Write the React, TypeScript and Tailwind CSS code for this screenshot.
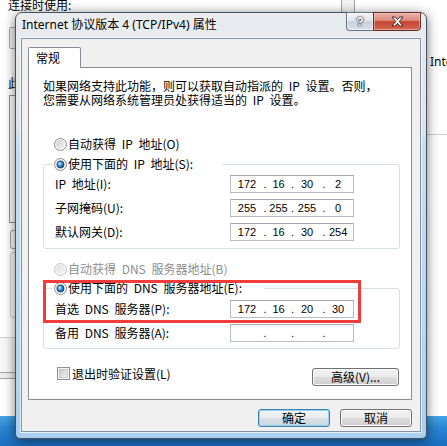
import React from 'react';

// slot widths of the four-field address control: field . field . field . field
const ipSlots = ['w-[32px]', 'w-[4px]', 'w-[23px]', 'w-[5px]', 'w-[24px]', 'w-[10px]', 'w-[18px]'];

const IpBox: React.FC<{ value?: string[] }> = ({ value }) => {
  const p = value ?? ['', '', '', ''];
  const segs = [p[0], '.', p[1], '.', p[2], '.', p[3]];
  return (
    <div className="flex h-[18px] w-[124px] items-center border border-[#b8bcc3] border-t-[#a4a7ae] bg-white font-['Liberation_Sans',sans-serif] text-[11px] leading-none text-black">
      {segs.map((s, i) => (
        <span key={i} className={`${ipSlots[i]} text-center`}>{s}</span>
      ))}
    </div>
  );
};

const Defs = () => (
  <svg width="0" height="0" className="absolute">
    <defs>
      <linearGradient id="rIn" x1="0" y1="0" x2="1" y2="1">
        <stop offset="0" stopColor="#c9cbce" />
        <stop offset="1" stopColor="#f7f7f7" />
      </linearGradient>
      <radialGradient id="rDot" cx="0.4" cy="0.4" r="0.65">
        <stop offset="0" stopColor="#9fe0ff" />
        <stop offset="0.55" stopColor="#2f86cf" />
        <stop offset="1" stopColor="#123d70" />
      </radialGradient>
      <linearGradient id="cbIn" x1="0" y1="0" x2="1" y2="1">
        <stop offset="0" stopColor="#c4c6c8" />
        <stop offset="1" stopColor="#f3f3f3" />
      </linearGradient>
    </defs>
  </svg>
);

const Radio: React.FC<{ checked?: boolean; disabled?: boolean }> = ({ checked, disabled }) => (
  <svg width="13" height="13" viewBox="0 0 13 13" className="shrink-0">
    <circle cx="6.5" cy="6.5" r="6" fill="#f4f4f4" stroke={disabled ? '#c6c6c6' : '#8e8f8f'} />
    <circle cx="6.5" cy="6.5" r="4.4" fill="url(#rIn)" opacity={disabled ? 0.5 : 1} />
    {checked && (
      <>
        <circle cx="6.5" cy="6.5" r="3.5" fill="url(#rDot)" stroke="#163f6e" strokeWidth="0.8" />
        <circle cx="5.6" cy="5.5" r="1.1" fill="#d6f1ff" opacity="0.85" />
      </>
    )}
  </svg>
);

const RadioRow: React.FC<{ label: string; checked?: boolean; disabled?: boolean; className?: string }> = ({ label, checked, disabled, className = '' }) => (
  <div className={`flex h-[16px] items-center gap-[1px] text-[12px] leading-[16px] ${disabled ? 'text-[#8d8d8d]' : 'text-black'} ${className}`}>
    <Radio checked={checked} disabled={disabled} />
    <span className="whitespace-nowrap">{label}</span>
  </div>
);

const Field: React.FC<{ label: string; ip?: string[] }> = ({ label, ip }) => (
  <div className="flex items-center">
    <span className="w-[175px] whitespace-nowrap text-[12px] leading-[18px]">{label}</span>
    <IpBox value={ip} />
  </div>
);

const btn =
  'flex h-[18px] items-center justify-center rounded-[3px] border border-[#707070] bg-[linear-gradient(#f2f2f2,#ebebeb_50%,#dddddd_50%,#cfcfcf)] text-[12px] leading-none text-black shadow-[inset_0_0_0_1px_#fbfbfb]';

export default function App() {
  return (
    <div className="relative h-[446px] w-[447px] overflow-hidden bg-white font-['Noto_Sans_CJK_SC','Noto_Sans',sans-serif] text-black">
      <Defs />

      {/* desktop behind the dialog */}
      <span className="absolute left-[8px] top-[-3px] text-[12px] leading-[16px]">连接时使用:</span>
      <div className="absolute left-[9px] top-[27px] h-[22px] w-[14px] rounded-[2px] border border-[#a9a9a9] bg-[#f4f4f4]" />
      <span className="absolute left-[8px] top-[75px] text-[12px] leading-[16px]">此</span>
      <div className="absolute left-[9px] top-[95px] h-[128px] w-[14px] border border-[#8e8f8f] bg-white" />
      <div className="absolute left-[10px] top-[230px] h-[19px] w-[14px] rounded-[3px] border border-[#9e9e9e]" />
      <div className="absolute left-[10px] top-[252px] h-[66px] w-[14px] rounded-[3px] border border-[#cfcfcf]" />
      <div className="absolute left-0 top-[337px] h-[35px] w-[15px] border-t border-[#cfcfcf] bg-[#f7f7f7]" />
      <div className="absolute left-0 top-[372px] h-[7px] w-[15px] border-y border-[#a3a3a3] bg-[#efefef]" />
      <div className="absolute left-[341px] top-0 h-[12px] w-[14px] border-x border-[#a0a0a0] bg-[#f3f3f3]" />
      <span className="absolute left-[430px] top-[54px] font-['Noto_Sans',sans-serif] text-[12px] leading-[16px]">Internet</span>
      <div className="absolute left-[427px] top-[134px] h-px w-[20px] bg-[#c9c9c9]" />
      <div className="absolute left-0 top-[416px] h-[30px] w-[447px] bg-[linear-gradient(#46a3e4,#2a86d3_40%,#1b6cbf)]" />

      {/* dialog window */}
      <div className="absolute left-[15px] top-[12px] flex h-[427px] w-[412px] flex-col rounded-t-[7px] rounded-b-[5px] border border-[#46525f] bg-[linear-gradient(180deg,#e8ebef_0%,#dfe4ea_27%,#c5ddf2_31%,#b7d7f1_70%,#a9cfee_100%)] shadow-[0_2px_12px_rgba(0,0,0,0.55)]">
        {/* caption */}
        <div className="flex h-[25px] items-start">
          <span className="pl-[6px] pt-[4px] font-['Noto_Sans','Noto_Sans_CJK_SC',sans-serif] text-[12px] leading-[16px] text-black [text-shadow:0_0_6px_#ffffff]">
            Internet 协议版本 4 (TCP/IPv4) 属性
          </span>
          <div className="-mt-px ml-auto mr-[5px] flex">
            <div className="flex h-[19px] w-[27px] items-center justify-center rounded-bl-[4px] border border-r-0 border-[#66717f] bg-[linear-gradient(#f1f4f7,#dfe5ec_45%,#c6d0db_52%,#d6e0ea)] shadow-[inset_0_0_0_1px_rgba(255,255,255,0.6)]">
              <span className="font-['Liberation_Sans',sans-serif] text-[13px] font-bold leading-none text-white [text-shadow:0_0_1px_#2a2a2a,0_0_1px_#2a2a2a,0_0_2px_#2a2a2a]">?</span>
            </div>
            <div className="flex h-[19px] w-[48px] items-center justify-center rounded-br-[4px] border border-[#5f2b25] bg-[linear-gradient(#e9b2a8,#dc8e80_42%,#c5442f_52%,#d46a55)] shadow-[inset_0_0_0_1px_rgba(255,210,200,0.5)]">
              <svg width="13" height="11" viewBox="0 0 13 11">
                <path d="M1 1h3.2l2.3 2.6L8.8 1H12L8.2 5.5 12 10H8.8L6.5 7.4 4.2 10H1l3.8-4.5z" fill="#ffffff" stroke="#3a1713" strokeWidth="0.9" strokeLinejoin="round" />
              </svg>
            </div>
          </div>
        </div>

        {/* client area */}
        <div className="mx-[5px] flex h-[394px] flex-col border border-[#8393a6] bg-[#f0f0f0] pl-[6px] pr-[8px] pt-[8px] shadow-[0_0_0_1px_rgba(255,255,255,0.65)]">
          <div className="relative z-10 flex h-[21px] w-[53px] items-center rounded-t-[2px] border border-b-0 border-[#898c95] bg-white pl-[7px] text-[12px] leading-none">
            常规
          </div>
          <div className="relative -mt-px flex h-[333px] w-[384px] flex-col border border-[#898c95] bg-white pl-[14px] [word-spacing:3px]">
            <div className="mt-[11px] whitespace-nowrap text-[12px] leading-[14px]">
              <p>如果网络支持此功能，则可以获取自动指派的 IP 设置。否则，</p>
              <p>您需要从网络系统管理员处获得适当的 IP 设置。</p>
            </div>

            <RadioRow className="ml-[11px] mt-[29px]" label="自动获得 IP 地址(O)" />

            <fieldset className="mt-[4px] w-[357px] rounded-[3px] border border-[#d5dfe5] pb-[7px]">
              <legend className="ml-[8px] w-[170px] pl-[2px]">
                <RadioRow checked label="使用下面的 IP 地址(S):" />
              </legend>
              <div className="mt-[3px] flex flex-col gap-[6px] pl-[11px]">
                <Field label="IP 地址(I):" ip={['172', '16', '30', '2']} />
                <Field label="子网掩码(U):" ip={['255', '255', '255', '0']} />
                <Field label="默认网关(D):" ip={['172', '16', '30', '254']} />
              </div>
            </fieldset>

            <RadioRow className="ml-[11px] mt-[12px]" disabled label="自动获得 DNS 服务器地址(B)" />

            <div className="relative mt-[3px] w-[357px]">
              <fieldset className="rounded-[3px] border border-[#d5dfe5] pb-[6px]">
                <legend className="ml-[8px] w-[212px] pl-[2px]">
                  <RadioRow checked label="使用下面的 DNS 服务器地址(E):" />
                </legend>
                <div className="mt-[4px] flex flex-col gap-[6px] pl-[11px]">
                  <Field label="首选 DNS 服务器(P):" ip={['172', '16', '20', '30']} />
                  <Field label="备用 DNS 服务器(A):" />
                </div>
              </fieldset>
              {/* red annotation frame */}
              <div className="pointer-events-none absolute left-0 top-0 h-[43px] w-[318px] border-[3px] border-[#f23c3c]" />
            </div>

            <div className="mt-[18px] flex w-[357px] items-start justify-between">
              <label className="ml-[14px] flex h-[13px] items-center gap-[2px] text-[12px] leading-none">
                <svg width="13" height="13" viewBox="0 0 13 13" className="shrink-0">
                  <rect x="0.5" y="0.5" width="12" height="12" fill="#f4f4f4" stroke="#8e8f8f" />
                  <rect x="2.5" y="2.5" width="8" height="8" fill="url(#cbIn)" stroke="#b5b7b9" strokeWidth="0.6" />
                </svg>
                退出时验证设置(L)
              </label>
              <button className={`${btn} mr-[1px] mt-[1px] w-[87px]`}>高级(V)...</button>
            </div>
          </div>

          <div className="mt-[9px] flex justify-end gap-[10px]">
            <button className="flex h-[18px] w-[72px] items-center justify-center rounded-[3px] border border-[#3c7fb1] bg-[linear-gradient(#f2f4f6,#e9edf0_50%,#d9e0e6_50%,#cdd6de)] text-[12px] leading-none text-black shadow-[inset_0_0_0_1px_#96d4f6]">
              确定
            </button>
            <button className={`${btn} w-[72px]`}>取消</button>
          </div>
        </div>
      </div>
    </div>
  );
}
